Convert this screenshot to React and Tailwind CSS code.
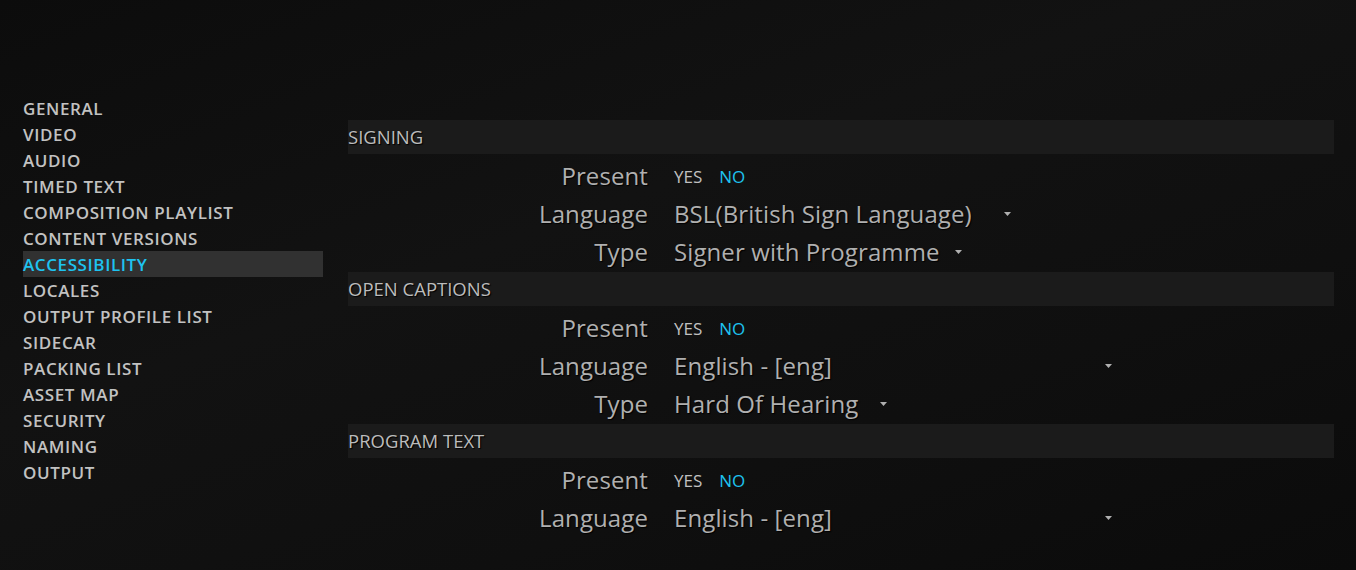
import React from 'react';

const navItems = [
    'GENERAL', 'VIDEO', 'AUDIO', 'TIMED TEXT', 'COMPOSITION PLAYLIST', 'CONTENT VERSIONS',
    'ACCESSIBILITY', 'LOCALES', 'OUTPUT PROFILE LIST', 'SIDECAR', 'PACKING LIST',
    'ASSET MAP', 'SECURITY', 'NAMING', 'OUTPUT',
];

const sections = [
    {
        title: 'SIGNING',
        rows: [
            { label: 'Present', type: 'toggle' },
            { label: 'Language', type: 'select', value: 'BSL(British Sign Language)', width: 'w-[337px]' },
            { label: 'Type', type: 'select', value: 'Signer with Programme', width: 'w-[288px]' },
        ],
    },
    {
        title: 'OPEN CAPTIONS',
        rows: [
            { label: 'Present', type: 'toggle' },
            { label: 'Language', type: 'select', value: 'English - [eng]', width: 'w-[438px]' },
            { label: 'Type', type: 'select', value: 'Hard Of Hearing', width: 'w-[213px]' },
        ],
    },
    {
        title: 'PROGRAM TEXT',
        rows: [
            { label: 'Present', type: 'toggle' },
            { label: 'Language', type: 'select', value: 'English - [eng]', width: 'w-[438px]' },
        ],
    },
];

function Caret() {
    return (
        <svg width="7" height="4" viewBox="0 0 7 4" className="shrink-0">
            <path d="M0 0 L7 0 L3.5 4 Z" fill="#b0b0b0" />
        </svg>
    );
}

function Row({ row }) {
    return (
        <div className="flex items-center h-[38px]">
            <div className="w-[300px] text-right text-[24px] leading-none text-[#b0b0b0] tracking-[0.1px] [text-shadow:1px_1px_1px_#000]">
                {row.label}
            </div>
            <div className="ml-[26px] flex items-center">
                {row.type === 'toggle' ? (
                    <div className="flex items-center gap-[17px] text-[17px] leading-none">
                        <span className="text-[#c0c0c0]">YES</span>
                        <span className="text-[#1ec3f0] font-medium">NO</span>
                    </div>
                ) : (
                    <div className={`flex items-center justify-between ${row.width} text-[24px] leading-none text-[#b0b0b0] tracking-[0.1px] [text-shadow:1px_1px_1px_#000]`}>
                        <span>{row.value}</span>
                        <Caret />
                    </div>
                )}
            </div>
        </div>
    );
}

export default function App() {
    return (
        <div
            className="w-[1356px] h-[570px] overflow-hidden flex bg-[linear-gradient(160deg,#0c0c0c_0%,#121212_40%,#0f0f0f_70%,#0b0b0b_100%)]"
            style={{ fontFamily: '"Open Sans", "Noto Sans", sans-serif' }}
        >
            {/* Side navigation */}
            <nav className="w-[348px] pl-[23px] pt-[95px] shrink-0">
                <ul className="w-[300px]">
                    {navItems.map((item) => (
                        <li
                            key={item}
                            className={`h-[26px] pt-[1px] flex items-center text-[17px] font-semibold tracking-[0.6px] ${item === 'ACCESSIBILITY' ? 'bg-[#313131] text-[#1ec3f0]' : 'text-[#c2c2c2]'}`}
                        >
                            {item}
                        </li>
                    ))}
                </ul>
            </nav>

            {/* Settings panel */}
            <main className="w-[986px] pt-[120px] flex flex-col gap-[1px]">
                {sections.map((section) => (
                    <section key={section.title}>
                        <div className="h-[34px] bg-[#1b1b1b] flex items-center text-[18.5px] text-[#bcbcbc] [text-shadow:1px_1px_1px_#000] mb-[3px]">
                            {section.title}
                        </div>
                        {section.rows.map((row) => (
                            <Row key={row.label} row={row} />
                        ))}
                    </section>
                ))}
            </main>
        </div>
    );
}
